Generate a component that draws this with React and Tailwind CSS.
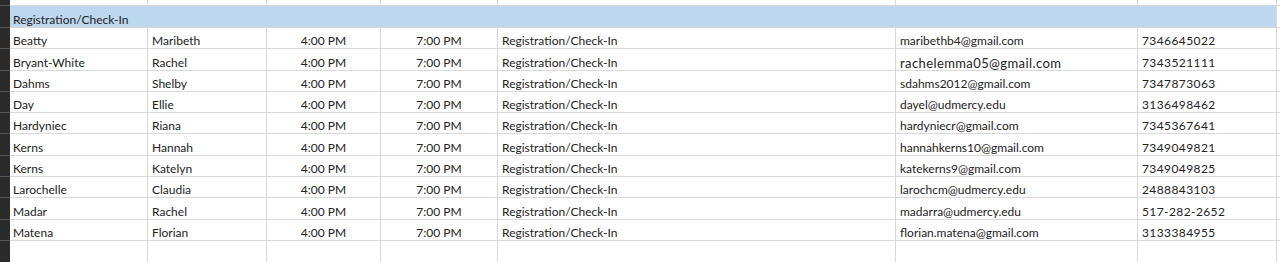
const rows = [
  ["Beatty", "Maribeth", "maribethb4@gmail.com", "7346645022"],
  ["Bryant-White", "Rachel", "rachelemma05@gmail.com", "7343521111"],
  ["Dahms", "Shelby", "sdahms2012@gmail.com", "7347873063"],
  ["Day", "Ellie", "dayel@udmercy.edu", "3136498462"],
  ["Hardyniec", "Riana", "hardyniecr@gmail.com", "7345367641"],
  ["Kerns", "Hannah", "hannahkerns10@gmail.com", "7349049821"],
  ["Kerns", "Katelyn", "katekerns9@gmail.com", "7349049825"],
  ["Larochelle", "Claudia", "larochcm@udmercy.edu", "2488843103"],
  ["Madar", "Rachel", "madarra@udmercy.edu", "517-282-2652"],
  ["Matena", "Florian", "florian.matena@gmail.com", "3133384955"],
];

const cols = "grid grid-cols-[10px_138px_119px_114px_117px_398px_242px_139px_1fr]";
const cell = "border-r border-b border-[#d9d9d9] flex items-end leading-[14px] overflow-hidden whitespace-nowrap";
const gutter = "bg-[#2b2b2b] border-b border-[#555]";

function EmptyRow({ h }) {
  return (
    <div className={`${cols} ${h}`}>
      <div className={gutter} />
      {[0, 1, 2, 3, 4, 5, 6].map((i) => (
        <div key={i} className="border-r border-b border-[#d9d9d9]" />
      ))}
      <div className="border-b border-[#d9d9d9]" />
    </div>
  );
}

export default function App() {
  return (
    <div
      className="w-[1280px] h-[262px] overflow-hidden bg-white text-[12px] text-[#222]"
      style={{ fontFamily: "Lato, 'Liberation Sans', sans-serif" }}
    >
      <EmptyRow h="h-[6px]" />
      <div className={`${cols} h-[22px]`}>
        <div className={gutter} />
        <div className="col-span-7 bg-[#bdd7ee] border-b border-r border-[#d9d9d9] flex items-end leading-[14px] pl-[3px]">
          Registration/Check-In
        </div>
        <div className="border-b border-[#d9d9d9]" />
      </div>
      {rows.map(([last, first, email, phone], i) => (
        <div key={i} className={`${cols} h-[21.3px]`}>
          <div className={gutter} />
          <div className={`${cell} pl-[3px]`}>{last}</div>
          <div className={`${cell} pl-[4px]`}>{first}</div>
          <div className={`${cell} justify-center`}>4:00 PM</div>
          <div className={`${cell} justify-center`}>7:00 PM</div>
          <div className={`${cell} pl-[4px]`}>Registration/Check-In</div>
          <div className={`${cell} pl-[4px] ${i === 1 ? "text-[13px] tracking-[0.4px]" : ""}`}>
            {email}
          </div>
          <div className={`${cell} pl-[4px] tracking-[0.4px]`}>{phone}</div>
          <div className="border-b border-[#d9d9d9]" />
        </div>
      ))}
      <EmptyRow h="h-[30px]" />
    </div>
  );
}
